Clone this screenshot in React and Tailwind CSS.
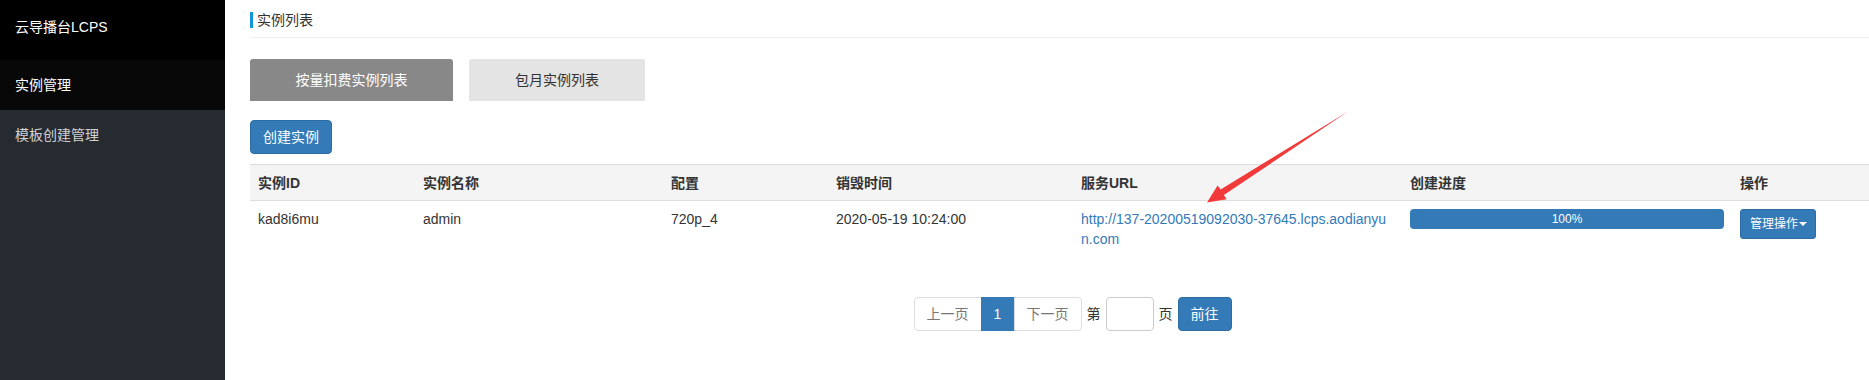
import React from "react";

const FONT = { fontFamily: '"Liberation Sans", "Noto Sans CJK SC", sans-serif' };

function Sidebar() {
  return (
    <div className="w-[225px] shrink-0 h-[380px] bg-[#262a31] text-[14px]">
      <div className="h-[60px] bg-black text-white flex items-center pl-[15px] pb-[6px]">云导播台LCPS</div>
      <div className="h-[50px] bg-[#080808] text-white flex items-center pl-[15px]">实例管理</div>
      <div className="h-[50px] text-[#d2d2d2] flex items-center pl-[15px]">模板创建管理</div>
    </div>
  );
}

function Arrow() {
  return (
    <svg className="absolute left-0 top-0 pointer-events-none" width="1869" height="380" viewBox="0 0 1869 380">
      <polygon
        points="1348,111.5 1223.9,195 1226.6,199.2 1207,202.5 1217.6,185.4 1220.6,189.6"
        fill="#f23a3a"
      />
    </svg>
  );
}

export default function App() {
  const cols = [165, 248, 165, 245, 329, 330];
  const heads = ["实例ID", "实例名称", "配置", "销毁时间", "服务URL", "创建进度", "操作"];
  return (
    <div className="relative flex w-[1869px] h-[380px] bg-white text-[#333] overflow-hidden" style={FONT}>
      <Sidebar />
      <div className="flex-1 pl-[25px]">
        <div className="h-[38px] border-b border-[#eee] flex items-center pt-[3px]">
          <div className="border-l-[3px] border-[#1296db] pl-[4px] leading-[16px] text-[14px] text-[#333]">实例列表</div>
        </div>
        <div className="flex gap-[16px] mt-[21px]">
          <div className="w-[203px] h-[42px] bg-[#888] text-white text-[14px] flex items-center justify-center rounded-t-[3px]">按量扣费实例列表</div>
          <div className="w-[176px] h-[42px] bg-[#e4e4e4] text-[#333] text-[14px] flex items-center justify-center rounded-t-[3px]">包月实例列表</div>
        </div>
        <div className="mt-[19px]">
          <button className="h-[34px] px-[12px] bg-[#337ab7] border border-[#2e6da4] text-white text-[14px] rounded-[4px] leading-[20px]">创建实例</button>
        </div>
        <table className="mt-[10px] w-full table-fixed border-collapse text-[14px]">
          <colgroup>
            {cols.map((w, i) => (
              <col key={i} style={{ width: w }} />
            ))}
            <col />
          </colgroup>
          <thead>
            <tr className="bg-[#f4f4f4] border-t border-b border-[#ddd]">
              {heads.map((h) => (
                <th key={h} className="text-left font-bold px-[8px] h-[36px] leading-[20px] text-[#333]">{h}</th>
              ))}
            </tr>
          </thead>
          <tbody>
            <tr className="align-top">
              <td className="px-[8px] py-[8px] leading-[20px]">kad8i6mu</td>
              <td className="px-[8px] py-[8px] leading-[20px]">admin</td>
              <td className="px-[8px] py-[8px] leading-[20px]">720p_4</td>
              <td className="px-[8px] py-[8px] leading-[20px]">2020-05-19 10:24:00</td>
              <td className="px-[8px] py-[8px] leading-[20px]">
                <div className="w-[309px] break-all text-[#337ab7]">http://137-20200519092030-37645.lcps.aodianyun.com</div>
              </td>
              <td className="px-[8px] py-[8px]">
                <div className="h-[20px] w-full rounded-[4px] bg-[#337ab7] text-white text-[12px] leading-[20px] text-center">100%</div>
              </td>
              <td className="px-[8px] py-[8px]">
                <button className="h-[30px] pl-[9px] pr-[8px] bg-[#337ab7] border border-[#2e6da4] text-white text-[12px] rounded-[3px] flex items-center">
                  管理操作
                  <span className="ml-[1px] w-0 h-0 border-l-[4px] border-r-[4px] border-t-[4px] border-l-transparent border-r-transparent border-t-white"></span>
                </button>
              </td>
            </tr>
          </tbody>
        </table>
        <div className="mt-[40px] flex justify-center items-center pl-[26px] text-[14px]">
          <div className="flex">
            <span className="h-[34px] px-[12px] border border-[#ddd] rounded-l-[4px] text-[#777] leading-[32px]">上一页</span>
            <span className="h-[34px] w-[34px] -ml-px bg-[#337ab7] border border-[#337ab7] text-white leading-[32px] text-center">1</span>
            <span className="h-[34px] px-[12px] -ml-px border border-[#ddd] rounded-r-[4px] text-[#777] leading-[32px]">下一页</span>
          </div>
          <span className="ml-[5px] text-[#333]">第</span>
          <div className="ml-[5px] w-[48px] h-[34px] border border-[#ccc] rounded-[4px]"></div>
          <span className="ml-[5px] text-[#333]">页</span>
          <button className="ml-[5px] h-[34px] px-[12px] bg-[#337ab7] border border-[#2e6da4] text-white rounded-[4px] leading-[20px]">前往</button>
        </div>
      </div>
      <Arrow />
    </div>
  );
}
